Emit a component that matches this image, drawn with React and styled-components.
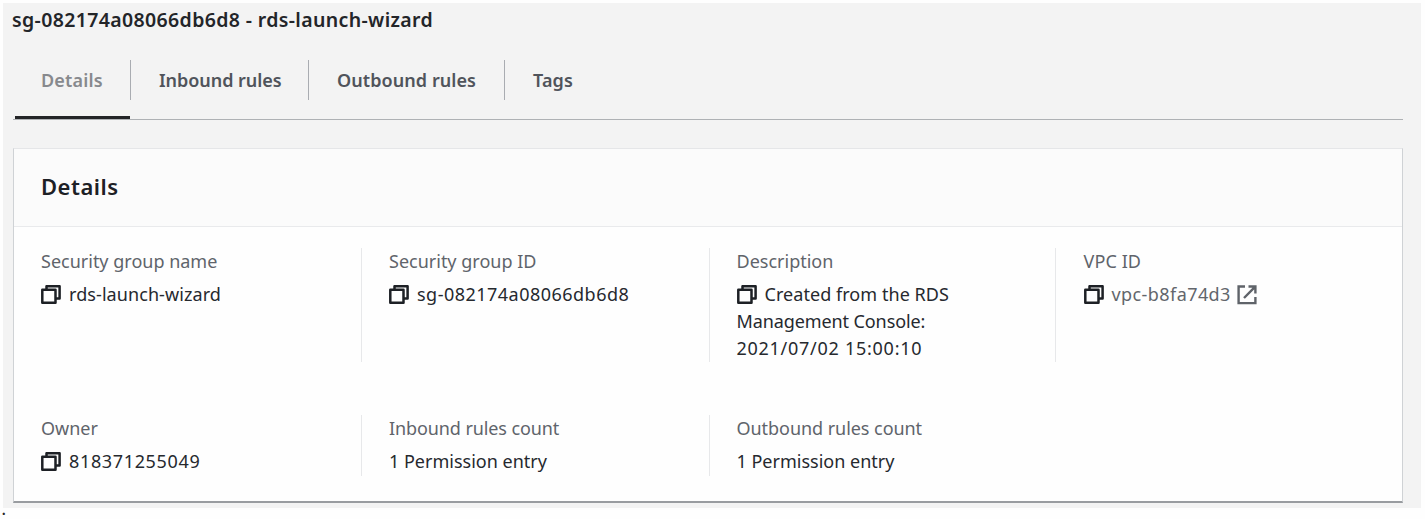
import React from 'react';
import styled, { createGlobalStyle } from 'styled-components';

const GlobalStyle = createGlobalStyle`
  * { box-sizing: border-box; }
  body {
    margin: 0;
    background: #fefefe;
    font-family: "Noto Sans", "Open Sans", sans-serif;
    color: #16191f;
  }
`;

const Page = styled.div`
  height: 519px;
  padding: 3px 4px 0 3px;
  overflow: hidden;
`;

const Panel = styled.main`
  height: 505px;
  padding: 0 18px 0 10px;
  background: #f3f3f3;
`;

const Text = styled.span`
  letter-spacing: ${(p) => p.$track || 0}px;
  white-space: nowrap;
`;

const Title = styled.h1`
  margin: 0 0 0 -1px;
  height: 37px;
  font-size: 19.5px;
  line-height: 34px;
  font-weight: 600;
  color: #232529;
`;

const TabList = styled.nav`
  display: flex;
  height: 80px;
  border-bottom: 1px solid #aeb1b4;
`;

const Tab = styled.button`
  display: flex;
  flex-direction: column;
  justify-content: space-between;
  width: ${(p) => p.$width}px;
  height: 79px;
  padding: 20px 0 0;
  border: 0;
  background: none;
  font: 600 18px/40px "Noto Sans", sans-serif;
  color: ${(p) => (p.$active ? '#87898d' : '#50545b')};
`;

const TabLabel = styled.span`
  display: block;
  width: 100%;
  height: 40px;
  padding-left: 28px;
  text-align: left;
  border-right: ${(p) => (p.$last ? '0' : '1px solid #a9acb1')};
`;

const ActiveBar = styled.span`
  width: 115px;
  height: 3px;
  margin-left: 2px;
  background: #232427;
`;

const Card = styled.section`
  height: 355px;
  margin-top: 28px;
  border: 1px solid #cfd2d5;
  border-top-color: #e5e6e8;
  border-bottom: 2px solid #999ca0;
  background: #fefefe;
`;

const CardHeader = styled.header`
  height: 78px;
  padding-left: 27px;
  border-bottom: 1px solid #e9eaec;
  background: #fbfbfb;
`;

const CardTitle = styled.h2`
  margin: 0;
  font-size: 22px;
  line-height: 75px;
  font-weight: 600;
  color: #1d2025;
`;

const Grid = styled.div`
  display: grid;
  grid-template-columns: 348px 348px 346px 1fr;
  grid-template-rows: 114px 61px;
  row-gap: 53px;
  padding-top: 21px;
`;

const Field = styled.div`
  padding-left: ${(p) => p.$inset || 27}px;
  border-right: ${(p) => (p.$divided ? '1px solid #e7e8ea' : '0')};
`;

const Label = styled.div`
  height: 33px;
  font-size: 18px;
  line-height: 26px;
  color: #5f646b;
`;

const Value = styled.div`
  font-size: 18px;
  line-height: 27px;
  color: ${(p) => (p.$link ? '#62666c' : '#26292e')};
`;

const Line = styled.div`
  display: flex;
  align-items: center;
  height: 27px;
`;

const Icon = styled.svg`
  flex: none;
  width: 20px;
  height: 20px;
  margin-right: ${(p) => (p.$trailing ? 0 : 8)}px;
  margin-left: ${(p) => (p.$trailing ? 6 : 0)}px;
`;

const FootMark = styled.div`
  height: 11px;
  margin-left: -1px;
  font: 700 14px/6px "Liberation Serif", serif;
  color: #222;
`;

const CopyIcon = () => (
  <Icon viewBox="0 0 20 20" fill="none" stroke="#1d2025" strokeWidth="2.5" strokeLinejoin="round">
    <path d="M5.5 5V1.2h13.1V13.6H14.8" />
    <rect x="1.3" y="4.8" width="13.2" height="13" />
  </Icon>
);

const ExternalIcon = () => (
  <Icon $trailing viewBox="0 0 20 20" fill="none" stroke="#5f6369" strokeWidth="2.4">
    <path d="M8 1.5H1.6v16.6h16.8V12M11.5 1.5h6.9v7M18 1.9 7 13" />
  </Icon>
);

const tabs = [
  { label: 'Details', width: 118, active: true, track: 0.15 },
  { label: 'Inbound rules', width: 178, track: -0.05 },
  { label: 'Outbound rules', width: 196, track: 0.07 },
  { label: 'Tags', width: 100, last: true, track: 0.1 },
];

const fields = [
  { label: 'Security group name', lines: ['rds-launch-wizard'], lineTracks: [0.08], copy: true, divided: true },
  { label: 'Security group ID', lines: ['sg-082174a08066db6d8'], lineTracks: [0.48], copy: true, divided: true },
  {
    label: 'Description',
    lines: ['Created from the RDS', 'Management Console:', '2021/07/02 15:00:10'],
    lineTracks: [0.05, -0.1, 0.73],
    inset: 26.5,
    copy: true,
    divided: true,
  },
  { label: 'VPC ID', lines: ['vpc-b8fa74d3'], lineTracks: [0.42], track: 0.1, inset: 27.5, copy: true, link: true },
  { label: 'Owner', lines: ['818371255049'], lineTracks: [0.65], copy: true, divided: true },
  { label: 'Inbound rules count', lines: ['1 Permission entry'], track: -0.1, divided: true },
  { label: 'Outbound rules count', lines: ['1 Permission entry'], track: -0.05, inset: 26.5 },
];

export default function App() {
  return (
    <>
      <GlobalStyle />
      <Page>
        <Panel>
          <Title><Text $track={0.36}>sg-082174a08066db6d8 - rds-launch-wizard</Text></Title>
          <TabList>
            {tabs.map((t) => (
              <Tab key={t.label} $width={t.width} $active={t.active}>
                <TabLabel $last={t.last}><Text $track={t.track}>{t.label}</Text></TabLabel>
                {t.active && <ActiveBar />}
              </Tab>
            ))}
          </TabList>
          <Card>
            <CardHeader>
              <CardTitle><Text $track={0.5}>Details</Text></CardTitle>
            </CardHeader>
            <Grid>
              {fields.map((f) => (
                <Field key={f.label} $divided={f.divided} $inset={f.inset}>
                  <Label><Text $track={f.track}>{f.label}</Text></Label>
                  <Value $link={f.link}>
                    {f.lines.map((line, i) => (
                      <Line key={line}>
                        {f.copy && i === 0 && <CopyIcon />}
                        <Text $track={f.lineTracks?.[i]}>{line}</Text>
                        {f.link && <ExternalIcon />}
                      </Line>
                    ))}
                  </Value>
                </Field>
              ))}
            </Grid>
          </Card>
        </Panel>
        <FootMark>.</FootMark>
      </Page>
    </>
  );
}
